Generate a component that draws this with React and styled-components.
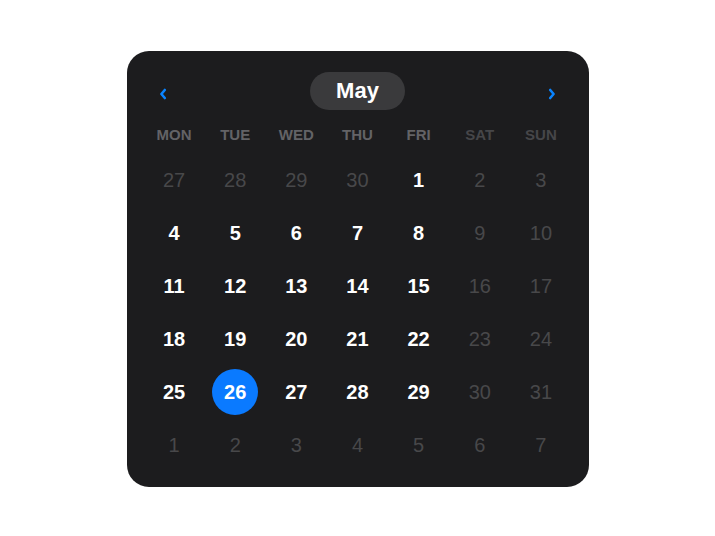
import React from "react";
import styled, { createGlobalStyle } from "styled-components";

const GlobalStyle = createGlobalStyle`
  html, body {
    margin: 0;
    padding: 0;
    background: #ffffff;
    font-family: "Liberation Sans", Arial, sans-serif;
  }
`;

const WEEKDAYS = ["MON", "TUE", "WED", "THU", "FRI", "SAT", "SUN"];

// 6 weeks, May starting on a Friday
const buildDays = () => {
  const days = [];
  [27, 28, 29, 30].forEach((d) => days.push({ d, inMonth: false }));
  for (let d = 1; d <= 31; d++) days.push({ d, inMonth: true });
  for (let d = 1; d <= 7; d++) days.push({ d, inMonth: false });
  return days;
};

const Chevron = ({ dir }) => (
  <svg width="8" height="12" viewBox="0 0 8 12" fill="none">
    <path
      d={dir === "left" ? "M5.8 2 L2.4 6 L5.8 10" : "M2.2 2 L5.6 6 L2.2 10"}
      stroke="#0a84ff"
      strokeWidth="2.6"
      strokeLinecap="round"
      strokeLinejoin="round"
    />
  </svg>
);

const App = () => {
  const days = buildDays();
  const selected = 26;

  return (
    <>
      <GlobalStyle />
      <Page>
        <Card>
          <Header>
            <NavButton aria-label="Previous month">
              <Chevron dir="left" />
            </NavButton>
            <MonthPill>May</MonthPill>
            <NavButton aria-label="Next month">
              <Chevron dir="right" />
            </NavButton>
          </Header>
          <WeekRow>
            {WEEKDAYS.map((w, i) => (
              <WeekLabel key={w} $weekend={i >= 5}>
                {w}
              </WeekLabel>
            ))}
          </WeekRow>
          <DayGrid>
            {days.map((item, i) => {
              const weekend = i % 7 >= 5;
              const active = item.inMonth && !weekend;
              const isSel = item.inMonth && item.d === selected;
              return (
                <DayCell key={i}>
                  <Day $active={active} $selected={isSel}>
                    {item.d}
                  </Day>
                </DayCell>
              );
            })}
          </DayGrid>
        </Card>
      </Page>
    </>
  );
};

export default App;

const Page = styled.div`
  min-height: 100vh;
  box-sizing: border-box;
  padding-top: 2px;
  display: flex;
  align-items: center;
  justify-content: center;
`;

const Card = styled.div`
  width: 462px;
  box-sizing: border-box;
  padding: 21px 17px 19px;
  background: #1c1c1e;
  border-radius: 22px;
  display: flex;
  flex-direction: column;
`;

const Header = styled.div`
  display: flex;
  align-items: center;
  justify-content: space-between;
  height: 38px;
`;

const NavButton = styled.button`
  width: 38px;
  height: 38px;
  padding: 6px 0 0;
  border: none;
  background: transparent;
  display: flex;
  align-items: center;
  justify-content: center;
  cursor: pointer;
`;

const MonthPill = styled.div`
  height: 38px;
  padding: 0 26px;
  border-radius: 19px;
  background: #3a3a3c;
  color: #ffffff;
  font-size: 22px;
  font-weight: 700;
  display: flex;
  align-items: center;
`;

const WeekRow = styled.div`
  display: grid;
  grid-template-columns: repeat(7, 1fr);
  height: 18px;
  margin-top: 15px;
  align-items: center;
`;

const WeekLabel = styled.div`
  text-align: center;
  font-size: 15px;
  font-weight: 700;
  color: ${({ $weekend }) => ($weekend ? "#464649" : "#636366")};
`;

const DayGrid = styled.div`
  display: grid;
  grid-template-columns: repeat(7, 1fr);
  grid-auto-rows: 46px;
  row-gap: 7px;
  margin-top: 14px;
`;

const DayCell = styled.div`
  display: flex;
  align-items: center;
  justify-content: center;
`;

const Day = styled.div`
  width: 46px;
  height: 46px;
  border-radius: 50%;
  display: flex;
  align-items: center;
  justify-content: center;
  font-size: 20px;
  font-weight: ${({ $active }) => ($active ? 700 : 400)};
  color: ${({ $active, $selected }) =>
    $selected || $active ? "#ffffff" : "#48484a"};
  background: ${({ $selected }) => ($selected ? "#0a7aff" : "transparent")};
`;
